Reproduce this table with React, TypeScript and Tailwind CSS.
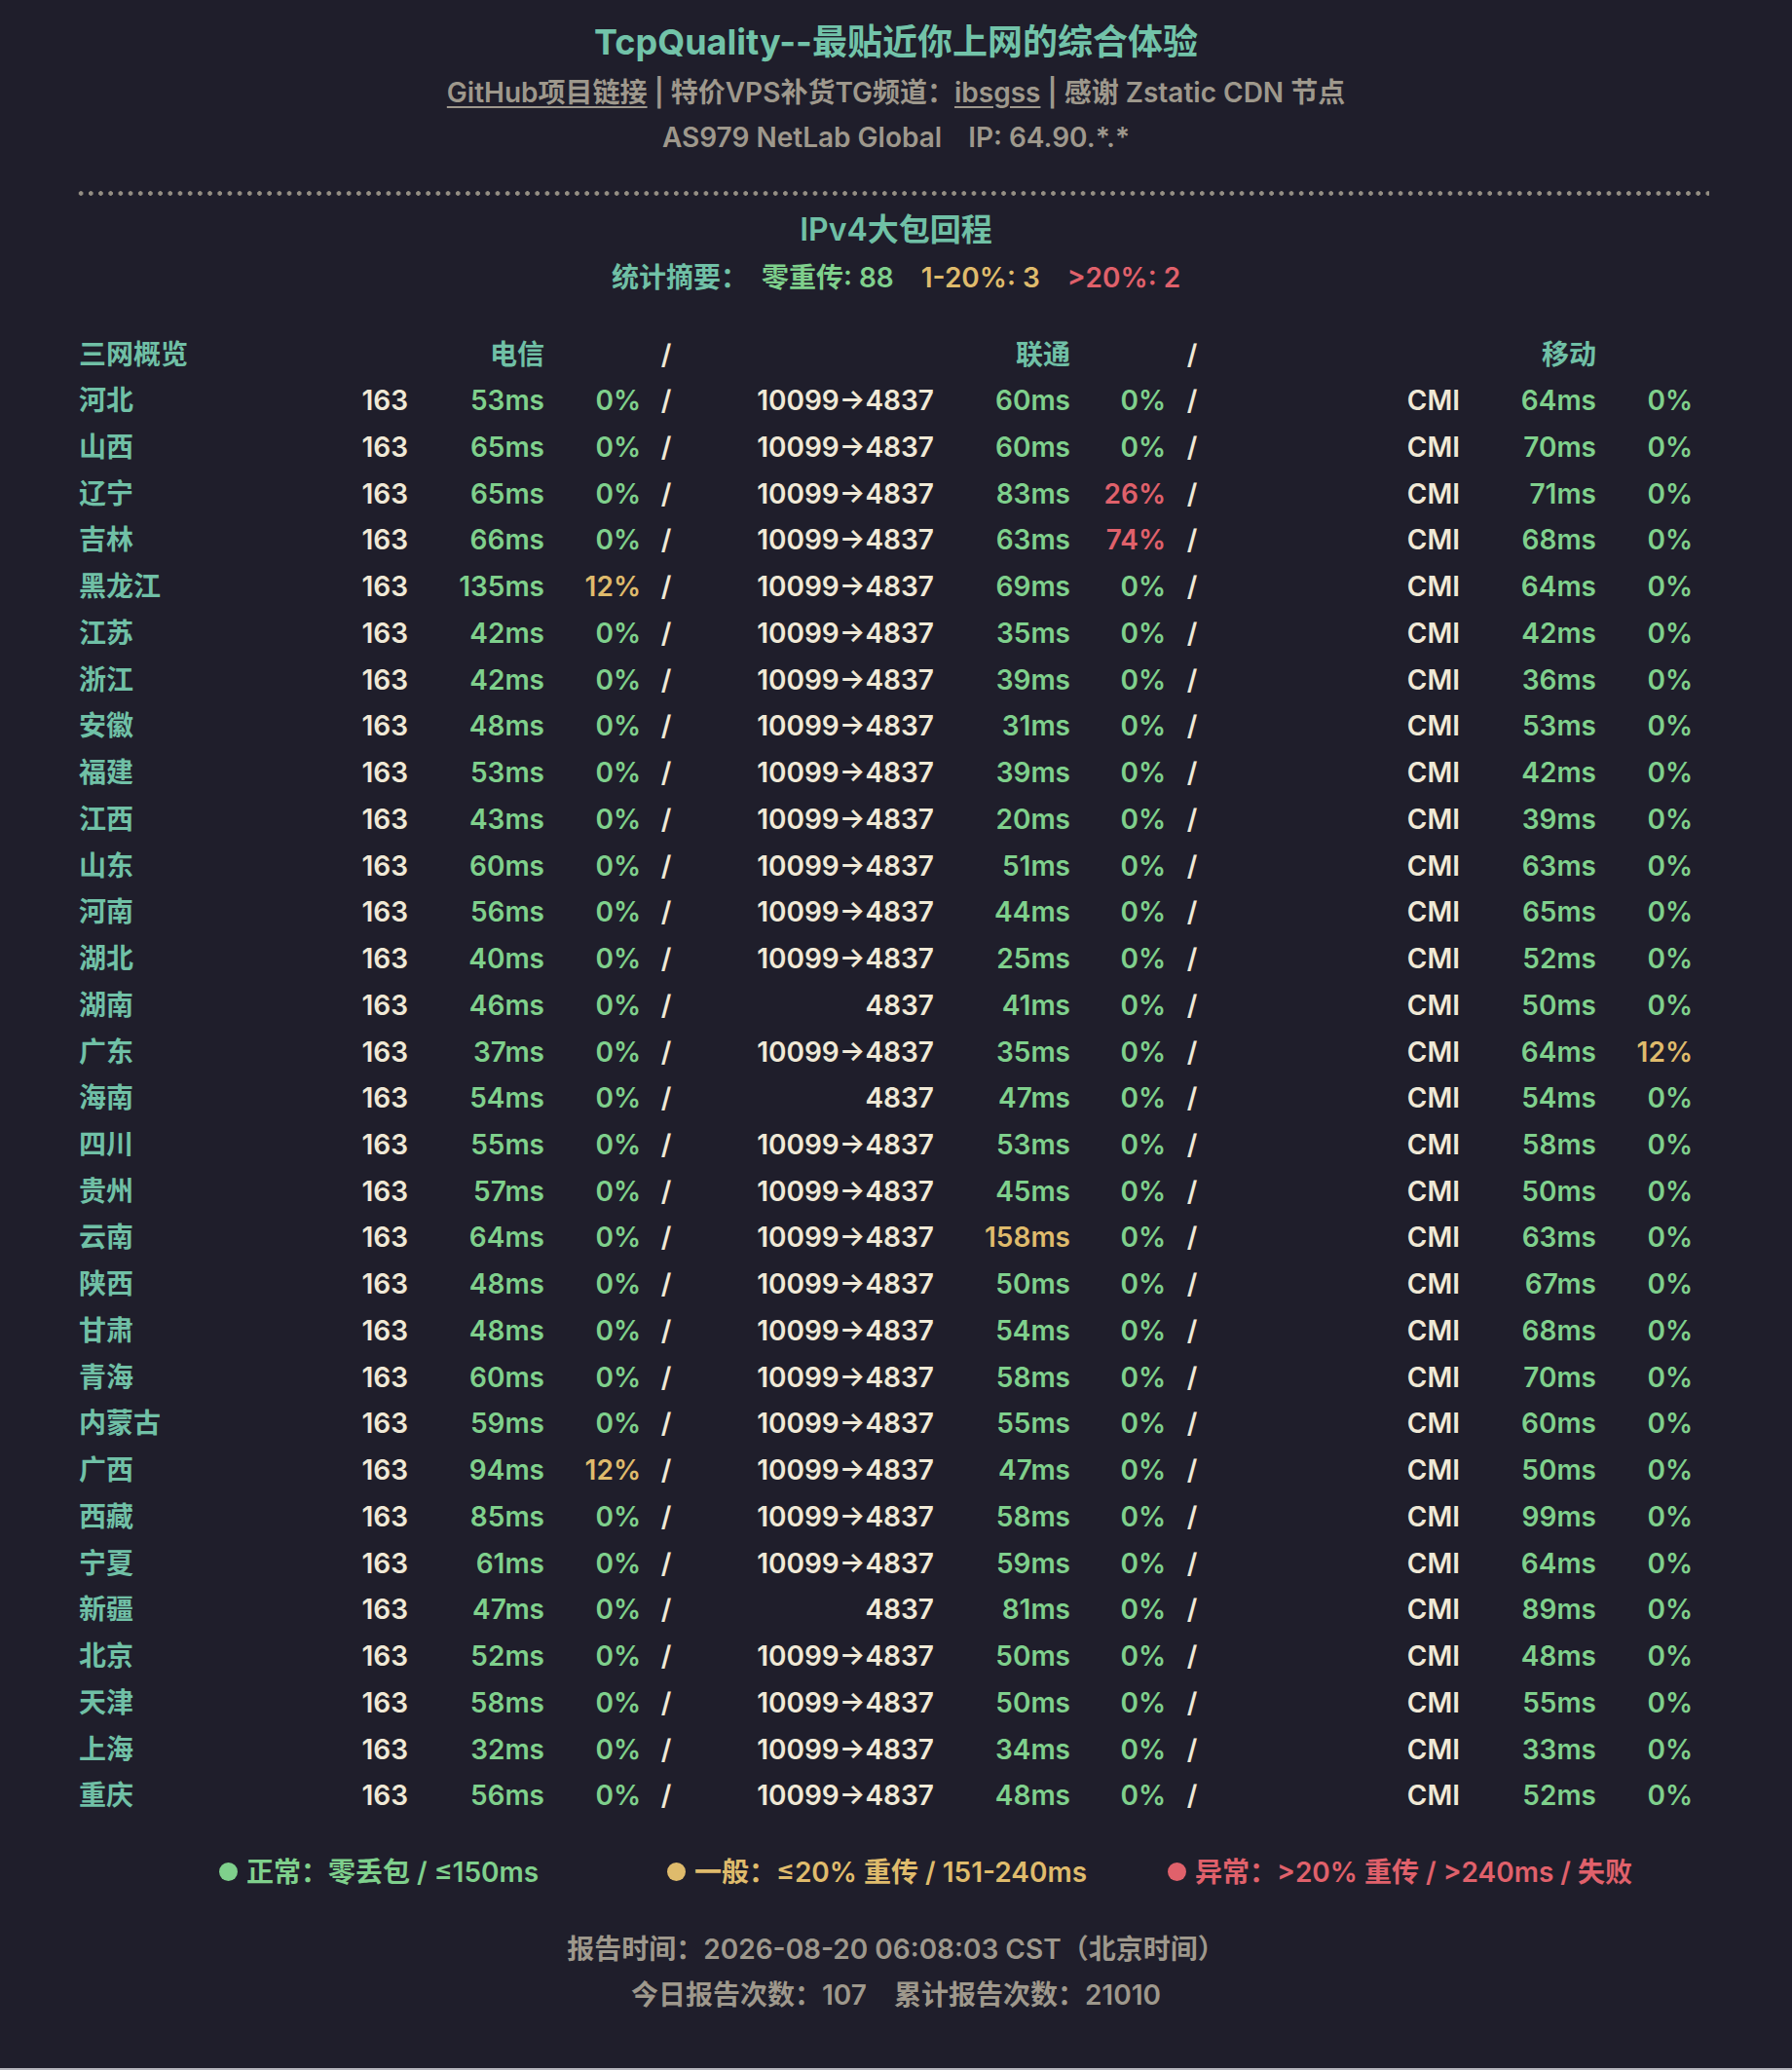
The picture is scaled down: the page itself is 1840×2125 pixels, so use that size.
import React from 'react';

type Row = [string, number, number, string, number, number, number, number];

const R = '10099→4837';

const rows: Row[] = [
    ['河北', 53, 0, R, 60, 0, 64, 0],
    ['山西', 65, 0, R, 60, 0, 70, 0],
    ['辽宁', 65, 0, R, 83, 26, 71, 0],
    ['吉林', 66, 0, R, 63, 74, 68, 0],
    ['黑龙江', 135, 12, R, 69, 0, 64, 0],
    ['江苏', 42, 0, R, 35, 0, 42, 0],
    ['浙江', 42, 0, R, 39, 0, 36, 0],
    ['安徽', 48, 0, R, 31, 0, 53, 0],
    ['福建', 53, 0, R, 39, 0, 42, 0],
    ['江西', 43, 0, R, 20, 0, 39, 0],
    ['山东', 60, 0, R, 51, 0, 63, 0],
    ['河南', 56, 0, R, 44, 0, 65, 0],
    ['湖北', 40, 0, R, 25, 0, 52, 0],
    ['湖南', 46, 0, '4837', 41, 0, 50, 0],
    ['广东', 37, 0, R, 35, 0, 64, 12],
    ['海南', 54, 0, '4837', 47, 0, 54, 0],
    ['四川', 55, 0, R, 53, 0, 58, 0],
    ['贵州', 57, 0, R, 45, 0, 50, 0],
    ['云南', 64, 0, R, 158, 0, 63, 0],
    ['陕西', 48, 0, R, 50, 0, 67, 0],
    ['甘肃', 48, 0, R, 54, 0, 68, 0],
    ['青海', 60, 0, R, 58, 0, 70, 0],
    ['内蒙古', 59, 0, R, 55, 0, 60, 0],
    ['广西', 94, 12, R, 47, 0, 50, 0],
    ['西藏', 85, 0, R, 58, 0, 99, 0],
    ['宁夏', 61, 0, R, 59, 0, 64, 0],
    ['新疆', 47, 0, '4837', 81, 0, 89, 0],
    ['北京', 52, 0, R, 50, 0, 48, 0],
    ['天津', 58, 0, R, 50, 0, 55, 0],
    ['上海', 32, 0, R, 34, 0, 33, 0],
    ['重庆', 56, 0, R, 48, 0, 52, 0],
];

const green = 'text-[#7fd08c]';
const yellow = 'text-[#dfbb6c]';
const red = 'text-[#e0616b]';

const msColor = (ms: number) => (ms > 240 ? red : ms > 150 ? yellow : green);
const lossColor = (p: number) => (p > 20 ? red : p > 0 ? yellow : green);

const cols =
    'grid grid-cols-[249px_89px_140px_99px_52px_249px_140px_98px_54px_248px_140px_99px] leading-[47.73px]';

const App: React.FC = () => {
    return (
        <div className="min-h-screen bg-[#1f1e2b] border-b-2 border-[#b4b4bc] pt-[17px] font-[family-name:Inter,'Noto_Sans_CJK_SC',sans-serif] font-semibold text-[28px] text-[#9e988c]">
            <header className="text-center">
                <h1 className="text-[36px] leading-[52px] font-bold text-[#72c3a9]">
                    TcpQuality--最贴近你上网的综合体验
                </h1>
                <p className="mt-[3px] leading-[46px]">
                    <a href="#" className="underline underline-offset-4">GitHub项目链接</a>
                    {' | '}特价VPS补货TG频道：
                    <a href="#" className="underline underline-offset-4">ibsgss</a>
                    {' | '}感谢 Zstatic CDN 节点
                </p>
                <p className="leading-[46px]">
                    AS979 NetLab Global
                    <span className="ml-[20px]"> IP: 64.90.*.*</span>
                </p>
            </header>

            <div className="mt-[32px] ml-[78px] mr-[85px] h-[5px] bg-[radial-gradient(circle,#958f84_2px,transparent_2.6px)] bg-[length:10.2px_5px] bg-repeat-x" />

            <section className="text-center">
                <h2 className="mt-[13px] text-[32px] leading-[44px] text-[#70c0a6]">IPv4大包回程</h2>
                <div className="mt-[4px] flex justify-center gap-[28px] leading-[46px]">
                    <span className="text-[#70c0a6] mr-[-14px]">统计摘要：</span>
                    <span className={green}>零重传: 88</span>
                    <span className={yellow}>1-20%: 3</span>
                    <span className={red}>&gt;20%: 2</span>
                </div>
            </section>

            <div className="mt-[32.5px] ml-[81px] text-[#f0e9d6]">
                <div className={cols}>
                    <span className="text-[#70c0a6]">三网概览</span>
                    <span />
                    <span className="text-right text-[#70c0a6]">电信</span>
                    <span />
                    <span className="text-center">/</span>
                    <span />
                    <span className="text-right text-[#70c0a6]">联通</span>
                    <span />
                    <span className="text-center">/</span>
                    <span />
                    <span className="text-right text-[#70c0a6]">移动</span>
                    <span />
                </div>
                {rows.map(([name, ctMs, ctLoss, route, cuMs, cuLoss, cmMs, cmLoss]) => (
                    <div key={name} className={cols}>
                        <span className="text-[#70c0a6]">{name}</span>
                        <span className="text-right">163</span>
                        <span className={`text-right ${msColor(ctMs)}`}>{ctMs}ms</span>
                        <span className={`text-right ${lossColor(ctLoss)}`}>{ctLoss}%</span>
                        <span className="text-center">/</span>
                        <span className="text-right">{route}</span>
                        <span className={`text-right ${msColor(cuMs)}`}>{cuMs}ms</span>
                        <span className={`text-right ${lossColor(cuLoss)}`}>{cuLoss}%</span>
                        <span className="text-center">/</span>
                        <span className="text-right">CMI</span>
                        <span className={`text-right ${msColor(cmMs)}`}>{cmMs}ms</span>
                        <span className={`text-right ${lossColor(cmLoss)}`}>{cmLoss}%</span>
                    </div>
                ))}
            </div>

            <div className="mt-[30.5px] flex pl-[225px] leading-[46px]">
                <span className={`flex items-center gap-[9px] ${green}`}>
                    <span className="size-[19px] rounded-full bg-[#7fd08c]" />
                    正常：零丢包 / ≤150ms
                </span>
                <span className={`ml-[132px] flex items-center gap-[9px] ${yellow}`}>
                    <span className="size-[19px] rounded-full bg-[#dfbb6c]" />
                    一般：≤20% 重传 / 151-240ms
                </span>
                <span className={`ml-[83px] flex items-center gap-[9px] ${red}`}>
                    <span className="size-[19px] rounded-full bg-[#e0616b]" />
                    异常：&gt;20% 重传 / &gt;240ms / 失败
                </span>
            </div>

            <footer className="mt-[33px] text-center leading-[46px] pb-[40px]">
                <p>报告时间：2026-08-20 06:08:03 CST（北京时间）</p>
                <p className="mt-[1px]">
                    今日报告次数：107<span className="ml-[28px]">累计报告次数：21010</span>
                </p>
            </footer>
        </div>
    );
};

export default App;
